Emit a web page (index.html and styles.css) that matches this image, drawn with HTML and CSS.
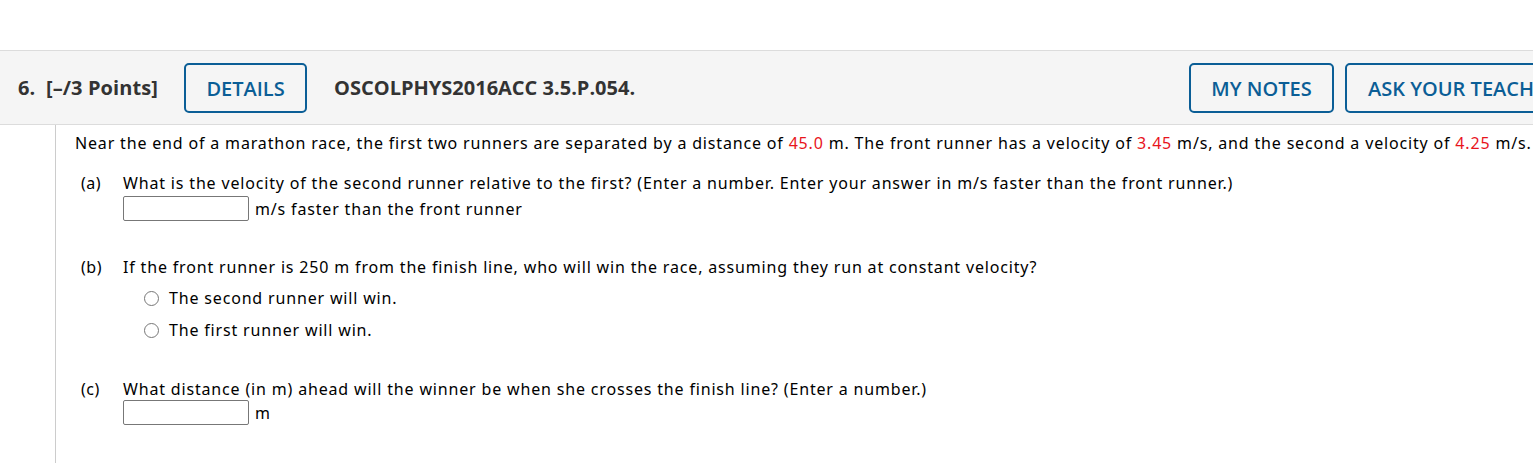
FILE: index.html
```html
<!DOCTYPE html>
<html>
<head>
<meta charset="utf-8">
<link rel="stylesheet" href="styles.css">
</head>
<body>
<div class="page">
  <div class="qhead">
    <span class="qnum">6.&nbsp; [–/3 Points]</span>
    <button class="btn btn-details">DETAILS</button>
    <span class="qcode">OSCOLPHYS2016ACC 3.5.P.054.</span>
    <span class="spacer"></span>
    <button class="btn btn-notes">MY NOTES</button>
    <button class="btn btn-ask">ASK YOUR TEACHER</button>
  </div>
  <div class="qbody">
    <p class="intro">Near the end of a marathon race, the first two runners are separated by a distance of <span class="red">45.0</span> m. The front runner has a velocity of <span class="red">3.45</span> m/s, and the second a velocity of <span class="red">4.25</span> m/s.</p>
    <div class="part part-a">
      <span class="plabel">(a)</span>
      <div class="pcontent">
        <div class="ptext">What is the velocity of the second runner relative to the first? (Enter a number. Enter your answer in m/s faster than the front runner.)</div>
        <div class="answer"><span class="box"></span><span class="unit">m/s faster than the front runner</span></div>
      </div>
    </div>
    <div class="part part-b">
      <span class="plabel">(b)</span>
      <div class="pcontent">
        <div class="ptext">If the front runner is 250 m from the finish line, who will win the race, assuming they run at constant velocity?</div>
        <div class="choices">
          <div class="choice"><span class="radio"></span>The second runner will win.</div>
          <div class="choice"><span class="radio"></span>The first runner will win.</div>
        </div>
      </div>
    </div>
    <div class="part part-c">
      <span class="plabel">(c)</span>
      <div class="pcontent">
        <div class="ptext">What distance (in m) ahead will the winner be when she crosses the finish line? (Enter a number.)</div>
        <div class="answer"><span class="box"></span><span class="unit">m</span></div>
      </div>
    </div>
  </div>
</div>
</body>
</html>
```

FILE: styles.css
```css
html, body {
  margin: 0;
  padding: 0;
  background: #ffffff;
  overflow: hidden;
}
.page {
  padding-top: 50px;
  width: 1533px;
}
.qhead {
  display: flex;
  align-items: center;
  height: 73px;
  background: #f5f5f5;
  border-top: 1px solid #dcdcdc;
  border-bottom: 1px solid #dcdcdc;
  font-family: "Open Sans", sans-serif;
  white-space: nowrap;
  overflow: hidden;
}
.qnum {
  margin-left: 18px;
  font-weight: 700;
  font-size: 20px;
  letter-spacing: 0.1px;
  color: #333333;
}
.qcode {
  margin-left: 27px;
  font-weight: 700;
  font-size: 20px;
  color: #333333;
}
.spacer { flex: 1; }
.btn {
  flex: none;
  height: 50px;
  box-sizing: border-box;
  border: 2px solid #0b5e96;
  border-radius: 5px;
  background: #f5f5f5;
  color: #0b5e96;
  font-family: "Open Sans", sans-serif;
  font-weight: 600;
  font-size: 20px;
  padding: 0 20px;
  margin-top: 1px;
}
.btn-details { margin-left: 26px; width: 123px; }
.btn-notes { width: 145px; }
.btn-ask { margin-left: 11px; margin-right: -80px; width: 268px; text-align: left; padding-left: 21px; }
.qbody {
  margin-left: 55px;
  border-left: 1px solid #cccccc;
  padding-left: 19px;
  height: 340px;
  font-family: "Noto Sans", sans-serif;
  font-size: 16px;
  letter-spacing: 0.83px;
  color: #000000;
  white-space: nowrap;
}
.intro {
  margin: 0;
  padding-top: 9px;
  line-height: 18px;
}
.red { color: #e8141c; }
.part {
  display: flex;
}
.plabel {
  width: 48px;
  flex: none;
  padding-left: 6px;
  box-sizing: border-box;
  color: #000;
  letter-spacing: 0.5px;
}
.part-a { margin-top: 22px; }
.part-b { margin-top: 37px; }
.part-c { margin-top: 41px; }
.ptext { line-height: 18px; }
.part .plabel { line-height: 18px; }
.answer {
  display: flex;
  align-items: center;
  margin-top: 4px;
}
.part-c .answer { margin-top: 2px; }
.box {
  width: 126px;
  height: 25px;
  box-sizing: border-box;
  border: 1px solid #777777;
  border-radius: 2px;
  background: #fff;
}
.unit { margin-left: 6px; }
.choices {
  padding-left: 21px;
}
.choice {
  display: flex;
  align-items: center;
  height: 18px;
  margin-top: 13px;
}
.choice + .choice { margin-top: 14px; }
.radio {
  width: 13px;
  height: 13px;
  border: 1px solid #777777;
  border-radius: 50%;
  margin-right: 10px;
  background: #fff;
}
```
